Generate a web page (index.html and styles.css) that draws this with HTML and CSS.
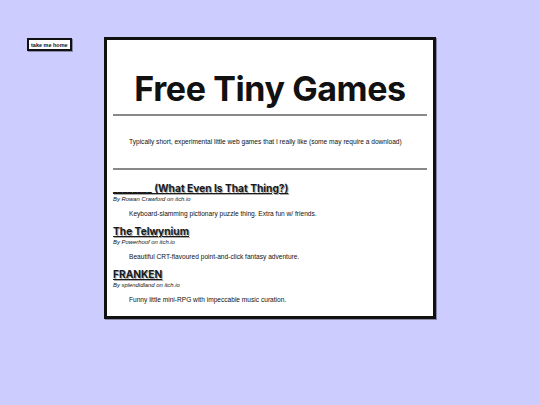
FILE: index.html
```html
<!DOCTYPE html>
<html>
<head>
<meta charset="utf-8">
<link rel="stylesheet" href="styles.css">
</head>
<body>
<div class="page">
  <div class="nav"><a class="home" href="#">take me home</a></div>
  <main class="box">
    <h1 class="title">Free Tiny Games</h1>
    <hr class="rule">
    <p class="intro">Typically short, experimental little web games that I really like (some may require a download)</p>
    <hr class="rule">
    <section class="game">
      <h2 class="game-title"><a href="#">________ (What Even Is That Thing?)</a></h2>
      <p class="by">By Rowan Crawford on itch.io</p>
      <p class="desc">Keyboard-slamming pictionary puzzle thing. Extra fun w/ friends.</p>
    </section>
    <section class="game">
      <h2 class="game-title"><a href="#">The Telwynium</a></h2>
      <p class="by">By Powerhoof on itch.io</p>
      <p class="desc">Beautiful CRT-flavoured point-and-click fantasy adventure.</p>
    </section>
    <section class="game">
      <h2 class="game-title"><a href="#">FRANKEN</a></h2>
      <p class="by">By splendidland on itch.io</p>
      <p class="desc">Funny little mini-RPG with impeccable music curation.</p>
    </section>
  </main>
</div>
</body>
</html>
```
FILE: styles.css
```css
html, body {
  margin: 0;
  padding: 0;
  background: #ccccff;
  font-family: "Liberation Sans", Arial, sans-serif;
  color: #111;
}
.page {
  position: relative;
  padding-top: 37px;
  min-height: 405px;
  box-sizing: border-box;
}
.nav {
  position: absolute;
  left: 27px;
  top: 38px;
}
.home {
  display: block;
  background: #fff;
  border: 2px solid #111;
  box-shadow: 1px 1px 0 #8888aa;
  font-size: 5.5px;
  font-weight: bold;
  color: #111;
  text-decoration: none;
  padding: 2px 2px 1px;
  line-height: 6px;
}
.box {
  margin: 0 auto;
  background: #fff;
  border: 3px solid #111;
  box-shadow: 1px 1px 0 #8888aa;
  padding: 14px 6px 12px 6px;
  box-sizing: border-box;
  width: 332px;
}
.title {
  font-family: Inter, "Liberation Sans", sans-serif;
  font-weight: 700;
  font-size: 34px;
  text-align: center;
  margin: 15px 0 5px;
  line-height: 40px;
  letter-spacing: -0.4px;
}
.rule {
  border: 0;
  height: 2px;
  background: #888;
  margin: 0;
}
.intro {
  font-size: 6.6px;
  margin: 21px 0 22px 16px;
  line-height: 9px;
}
.game {
  margin-top: 12px;
}
.game + .game { margin-top: 7px; }
.game-title {
  font-size: 10.2px;
  margin: 0;
  line-height: 13px;
  font-family: Inter, "Liberation Sans", sans-serif;
}
.game-title a {
  color: #1a1a1a;
  text-shadow: 1px 1px 0 #aaa;
}
.by {
  font-size: 5.9px;
  font-style: italic;
  margin: 1px 0 0;
  line-height: 7px;
}
.desc {
  font-size: 6.6px;
  margin: 6px 0 0 16px;
  line-height: 9px;
}
```
